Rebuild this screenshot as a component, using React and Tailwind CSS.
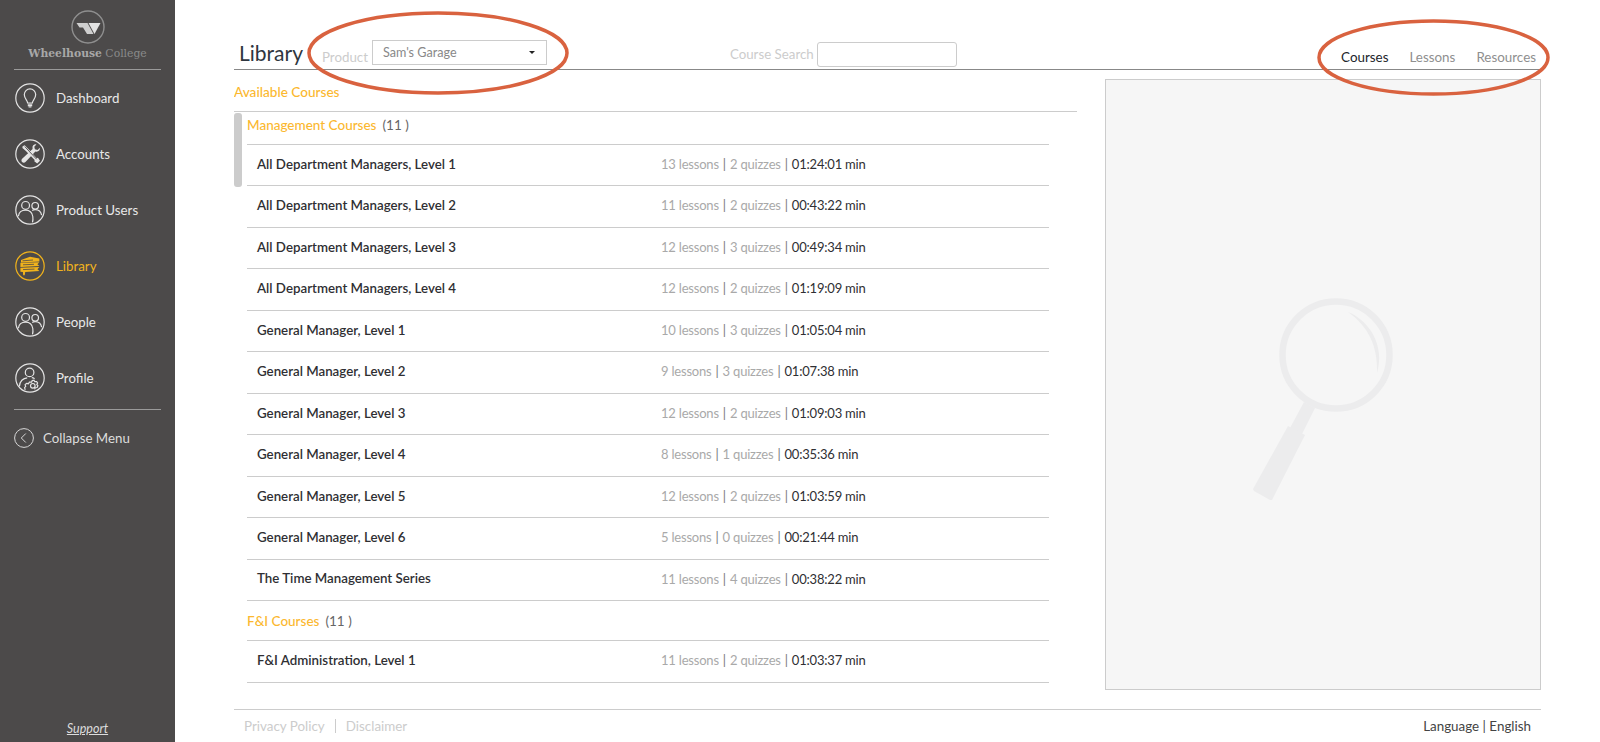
import React from "react";

const font = { fontFamily: "Lato, 'Noto Sans', sans-serif" };

const managementCourses = [
  ["All Department Managers, Level 1", "13 lessons", "2 quizzes", "01:24:01 min"],
  ["All Department Managers, Level 2", "11 lessons", "2 quizzes", "00:43:22 min"],
  ["All Department Managers, Level 3", "12 lessons", "3 quizzes", "00:49:34 min"],
  ["All Department Managers, Level 4", "12 lessons", "2 quizzes", "01:19:09 min"],
  ["General Manager, Level 1", "10 lessons", "3 quizzes", "01:05:04 min"],
  ["General Manager, Level 2", "9 lessons", "3 quizzes", "01:07:38 min"],
  ["General Manager, Level 3", "12 lessons", "2 quizzes", "01:09:03 min"],
  ["General Manager, Level 4", "8 lessons", "1 quizzes", "00:35:36 min"],
  ["General Manager, Level 5", "12 lessons", "2 quizzes", "01:03:59 min"],
  ["General Manager, Level 6", "5 lessons", "0 quizzes", "00:21:44 min"],
  ["The Time Management Series", "11 lessons", "4 quizzes", "00:38:22 min"],
];

const fiCourses = [["F&I Administration, Level 1", "11 lessons", "2 quizzes", "01:03:37 min"]];

const IconRing = ({ color = "#e4e4e4", children }) => (
  <svg width="30" height="30" viewBox="0 0 30 30" fill="none" stroke={color} strokeWidth="1.2">
    <circle cx="15" cy="15" r="14.2" />
    {children}
  </svg>
);

const BulbIcon = () => (
  <IconRing>
    <path d="M12.6 20c0-2.6-3.3-4-3.3-8.4a5.7 5.7 0 0 1 11.4 0c0 4.4-3.3 5.8-3.3 8.4z" />
    <path d="M12.8 21.2h4.4M12.8 22.6h4.4M13.6 24h2.8" strokeWidth="1.1" />
  </IconRing>
);

const ToolsIcon = () => (
  <IconRing>
    <g fill="#e4e4e4" stroke="none">
      <path d="M7.6 7.2l2.1-1 3.4 3.6 8.6 9.4 1.2-.4 2.1 3-2.8 2.7-2.9-2.2.4-1.2-8.8-9.2-3.5-2.9z" />
      <path d="M21.4 5.4c-2.2-.5-4.3 1.4-3.9 3.7l.1.8-10.2 9.6c-1.1 1-1.3 2.6-.3 3.6s2.6.8 3.6-.3l9.7-10.2.8.1c2.3.3 4.1-1.7 3.7-3.9l-2.4 2.1-2.6-.6-.6-2.5z" />
    </g>
    <path d="M9.8 7.6l11.8 12.6" stroke="#4c4a4a" strokeWidth="0.9" />
  </IconRing>
);

const UsersIcon = () => (
  <IconRing>
    <circle cx="10.6" cy="10.4" r="3.9" />
    <circle cx="20.2" cy="10.8" r="3.3" />
    <path d="M3.4 21.2c.5-4 3.6-6 7.2-6s6.5 2.1 7.2 6.3c.3 2 .2 4-.3 5.8" />
    <path d="M17.2 15.4c.9-.5 2-.7 3-.7 3.2 0 5.8 1.9 6.4 5.5" />
  </IconRing>
);

const LibraryIcon = () => (
  <svg width="30" height="30" viewBox="0 0 30 30" fill="none" stroke="#f1b31c" strokeWidth="1.2">
    <circle cx="15" cy="15" r="14.2" />
    <g fill="#f1b31c" stroke="none">
      <path d="M6 9l9-3.2 9.4 1.8v2.8L6 11.4z" />
      <path d="M5.4 11.8l19-.5-2 2 2 1.8-19 .8z" />
      <path d="M5.4 16.8l19-.8-2 2.2 2 1.8-14.2 1-.5 3.2H8.2l-.3-3.1-2.5-.4z" />
    </g>
    <path d="M7.5 9.8l10.5-.8M8 13.8l11-.5M8 18.6l11.5-.5" stroke="#4c4a4a" strokeWidth="0.8" />
  </svg>
);

const ProfileIcon = () => (
  <IconRing>
    <circle cx="14.6" cy="9.4" r="4.3" />
    <path d="M4.4 23.4c.2-5.2 3.8-8.4 7.8-8.6M16.8 14.7c1 .1 2 .5 2.8 1" />
    <path d="M10.2 26.8l-.6-2.2 1.1-1.3-.6-1.7 1.5-1.3 1.8.4 1-1.6h2.2l.6-1.5 1.7-.4.9 1.4 1.8-.1 1 1.5-.8 1.4 1.1 1.4-.8 1.7-1.7.2-.9 1.5" />
    <circle cx="17.8" cy="22.8" r="2.3" />
  </IconRing>
);

const navItems = [
  { label: "Dashboard", icon: <BulbIcon /> },
  { label: "Accounts", icon: <ToolsIcon /> },
  { label: "Product Users", icon: <UsersIcon /> },
  { label: "Library", icon: <LibraryIcon />, active: true },
  { label: "People", icon: <UsersIcon /> },
  { label: "Profile", icon: <ProfileIcon /> },
];

const CourseRow = ({ course }) => (
  <div className="flex h-[41.47px] items-center border-b border-[#cccccc] pb-[1px] pl-[10px]">
    <div className="w-[404px] shrink-0 text-[13.3px] font-semibold text-[#2f2f33]">{course[0]}</div>
    <div className="flex items-center whitespace-pre text-[13px] tracking-[-0.2px] text-[#a9a9a9]">
      <span>{course[1]}</span>
      <span className="mx-[4px] text-[#777777]">|</span>
      <span>{course[2]}</span>
      <span className="mx-[4px] text-[#777777]">|</span>
      <span className="text-[#2f2f33]">{course[3]}</span>
    </div>
  </div>
);

const GroupHeader = ({ title, count, className }) => (
  <div className={`flex items-center border-b border-[#cccccc] text-[13.5px] ${className}`}>
    <span className="font-medium text-[#fbb82f]">{title}</span>
    <span className="ml-[6px] text-[#666666]">({count} )</span>
  </div>
);

const Sidebar = () => (
  <aside className="flex h-full w-[175px] shrink-0 flex-col bg-[#4c4a4a] text-[13.3px] text-[#e8e8e8]">
    <div className="mx-[14px] flex h-[70px] shrink-0 flex-col items-center border-b border-[#9a9a9a] pt-[10px]">
      <svg width="34" height="34" viewBox="0 0 34 34" fill="none">
        <circle cx="17" cy="17" r="16" stroke="#8f8f8f" strokeWidth="1.4" />
        <path d="M5.5 13h11l6 11H16l-4-6.5H8.5z" fill="#cfcfcf" />
        <path d="M17.5 13h12l-6 11z" fill="#e2e2e2" />
      </svg>
      <div className="mt-[3px] whitespace-nowrap text-[10.8px] leading-[14px] text-[#8a8a8a]" style={{ fontFamily: "'DejaVu Serif', serif" }}>
        <span className="font-bold text-[#a8a8a8]">Wheelhouse</span> College
      </div>
    </div>
    <nav className="flex flex-col">
      {navItems.map((item) => (
        <div key={item.label} className={`flex h-[56px] items-center gap-[11px] pl-[15px] ${item.active ? "text-[#f1b31c]" : ""}`}>
          {item.icon}
          <span className="pt-[2px]">{item.label}</span>
        </div>
      ))}
    </nav>
    <div className="mx-[14px] mt-[3px] border-t border-[#9a9a9a]" />
    <div className="mt-[17px] flex items-center gap-[9px] pl-[14px] text-[#dddddd]">
      <svg width="20" height="20" viewBox="0 0 20 20" fill="none" stroke="#d8d8d8" strokeWidth="1">
        <circle cx="10" cy="10" r="9.4" />
        <path d="M11.8 5.5L7.3 10l4.5 4.5" />
      </svg>
      <span className="pt-[2px]">Collapse Menu</span>
    </div>
    <div className="mt-auto pb-[3px] text-center text-[12.5px] italic text-[#dddddd] underline">Support</div>
  </aside>
);

const Magnifier = () => (
  <svg width="146" height="208" viewBox="30 25 146 208">
    <circle cx="116" cy="84" r="53.5" fill="none" stroke="#ececed" strokeWidth="6.5" />
    <path d="M128 41c22 9 37 34 29 61 1-27-9-47-29-61z" fill="#ececed" />
    <path d="M84 131l11 6-13 26-12-6z" fill="#ececed" />
    <path d="M68 155l17 9-33 65-2 0-16-9-1-2z" fill="#ececed" />
  </svg>
);

const Oval = ({ className, w, h }) => (
  <svg className={`pointer-events-none absolute ${className}`} width={w} height={h} viewBox={`0 0 ${w} ${h}`} fill="none">
    <ellipse cx={w / 2} cy={h / 2} rx={w / 2 - 3} ry={h / 2 - 3} stroke="#d9623f" strokeWidth="3.5" />
  </svg>
);

export default function App() {
  return (
    <div className="relative flex h-screen w-full overflow-hidden bg-white" style={font}>
      <Sidebar />
      <main className="flex min-w-0 flex-1 flex-col pl-[59px] pr-[59px]">
        <header className="flex h-[70px] shrink-0 items-end border-b border-[#888888]">
          <h1 className="ml-[5px] mb-[1px] text-[21px] leading-[30px] text-[#2f3640]">Library</h1>
          <span className="ml-[19px] mb-[1px] text-[13.3px] text-[#cccccc]">Product</span>
          <div className="ml-[4px] mb-[4px] flex h-[25px] w-[175px] items-center justify-between border border-[#cccccc] pl-[10px] pr-[11px] text-[12.6px] text-[#888888]">
            <span className="pt-[1px]">Sam's Garage</span>
            <span className="h-0 w-0 border-x-[3px] border-t-[3px] border-x-transparent border-t-[#222222]" />
          </div>
          <span className="ml-[183px] mb-[4px] text-[13.3px] text-[#cccccc]">Course Search</span>
          <div className="ml-[3px] mb-[2px] h-[25px] w-[140px] rounded-[3px] border border-[#cccccc]" />
          <div className="ml-auto mb-[2px] flex gap-[21px] pr-[5px] text-[13.4px] text-[#8f8f8f]">
            <span className="text-[#22252b]">Courses</span>
            <span>Lessons</span>
            <span>Resources</span>
          </div>
        </header>
        <div className="flex min-h-0 flex-1 gap-[28px]">
          <section className="relative w-[843px] shrink-0 overflow-hidden">
            <div className="flex h-[42px] items-center border-b border-[#cccccc] pt-[4px] text-[13.6px] font-medium text-[#fbb82f]">
              Available Courses
            </div>
            <div className="absolute left-0 top-[43px] h-[74px] w-[8px] rounded-[3px] bg-[#cccccc]" />
            <div className="ml-[13px] mr-[28px]">
              <GroupHeader title="Management Courses" count="11" className="h-[33px] pb-[6px]" />
              {managementCourses.map((course) => (
                <CourseRow key={course[0]} course={course} />
              ))}
              <GroupHeader title="F&I Courses" count="11" className="h-[40px] pt-[1px]" />
              {fiCourses.map((course) => (
                <CourseRow key={course[0]} course={course} />
              ))}
            </div>
          </section>
          <section className="mt-[9px] mb-[19px] flex flex-1 items-center justify-center border border-[#cccccc] bg-[#f6f6f6] pt-[30px]">
            <Magnifier />
          </section>
        </div>
        <footer className="flex h-[33px] shrink-0 items-center justify-between border-t border-[#cccccc] pl-[10px] pr-[10px] pt-[1px] text-[13.4px]">
          <div className="flex items-center text-[#cccccc]">
            <span>Privacy Policy</span>
            <span className="mx-[10px] h-[14px] w-px bg-[#cccccc]" />
            <span>Disclaimer</span>
          </div>
          <div className="pb-[1px] text-[#444444]">Language | English</div>
        </footer>
      </main>
      <Oval className="left-[306px] top-[10px]" w={264} h={86} />
      <Oval className="left-[1316px] top-[18px]" w={235} h={79} />
    </div>
  );
}
